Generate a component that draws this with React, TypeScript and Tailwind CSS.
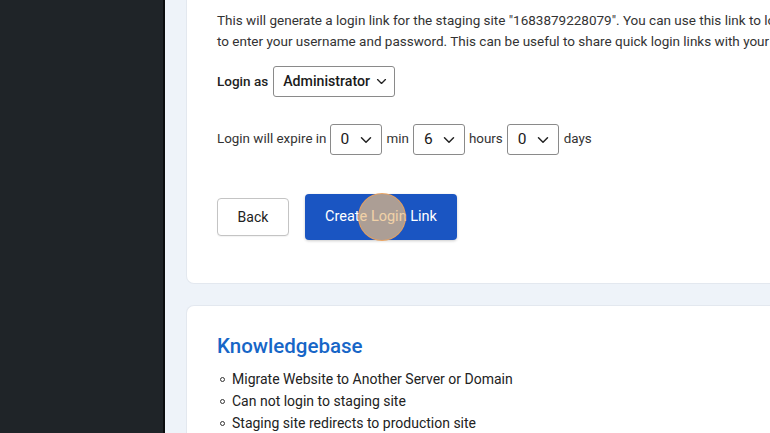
import React from "react";

function Chevron({ className = "" }: { className?: string }) {
  return (
    <svg viewBox="0 0 12 8" className={className} fill="none" stroke="#222" strokeWidth="1.5" strokeLinecap="round" strokeLinejoin="round">
      <path d="M1.5 1.8 L6 6.2 L10.5 1.8" />
    </svg>
  );
}

function NumSelect({ value }: { value: string }) {
  return (
    <div className="flex h-[31px] w-[52px] shrink-0 items-center justify-between rounded-[3px] border border-[#8a8a8a] bg-white pl-[10px] pr-[9px]">
      <span className="text-[15.5px] text-[#1a1a1a]">{value}</span>
      <Chevron className="h-[8px] w-[12px] shrink-0" />
    </div>
  );
}

function Bullet({ children }: { children: React.ReactNode }) {
  return (
    <li className="flex items-center">
      <span className="ml-[3px] mr-[7px] h-[5px] w-[5px] shrink-0 rounded-full border border-[#333]" />
      <span>{children}</span>
    </li>
  );
}

export default function App() {
  return (
    <div
      className="flex h-[433px] w-[770px] overflow-hidden bg-[#eef3f9] text-[#2b2b2b]"
      style={{ fontFamily: "Roboto, 'Liberation Sans', sans-serif" }}
    >
      <div className="h-full w-[163px] shrink-0 bg-[#1f2428]" />
      <div className="h-full w-[2px] shrink-0 bg-[#0b0d0f]" />
      <div className="flex shrink-0 flex-col pl-[21px]">
        <div className="w-[1000px] rounded-b-[8px] border border-t-0 border-[#e3e8ef] bg-white pb-[43px] pl-[30px] pt-[10px]">
          <p className="whitespace-nowrap text-[13.5px] leading-[21px] text-[#333]">
            This will generate a login link for the staging site "1683879228079". You can use this link to login without having
            <br />
            to enter your username and password. This can be useful to share quick login links with your clients.
          </p>
          <div className="mt-[14px] flex items-center gap-[5px]">
            <span className="text-[13.5px] font-medium text-[#222]">Login as</span>
            <div className="flex h-[31px] w-[122px] items-center justify-between rounded-[3px] border border-[#8a8a8a] bg-white pl-[9px] pr-[7px]">
              <span className="text-[14.2px] font-medium text-[#1a1a1a]">Administrator</span>
              <Chevron className="h-[7px] w-[11px] shrink-0" />
            </div>
          </div>
          <div className="mt-[27px] flex items-center text-[13.4px] text-[#333]">
            <span className="mr-[3px]">Login will expire in</span>
            <NumSelect value="0" />
            <span className="ml-[5px] mr-[4px]">min</span>
            <NumSelect value="6" />
            <span className="ml-[4px] mr-[4px]">hours</span>
            <NumSelect value="0" />
            <span className="ml-[5px]">days</span>
          </div>
          <div className="mt-[39px] flex items-center gap-[16px]">
            <button className="h-[38px] w-[72px] rounded-[4px] border border-[#c4c4c4] bg-white text-[14px] text-[#222] shadow-[0_1px_1px_rgba(0,0,0,0.05)]">
              Back
            </button>
            <div className="relative">
              <button className="h-[46px] w-[152px] rounded-[4px] bg-[#1a55c2] text-[14.5px] text-white shadow-[0_1px_3px_rgba(0,0,0,0.2)]">
                Create Login Link
              </button>
              <div className="pointer-events-none absolute left-[53px] top-[-1px] h-[48px] w-[48px] rounded-full border border-[rgba(235,160,90,0.85)] bg-[rgba(235,190,130,0.7)]" />
            </div>
          </div>
        </div>
        <div className="mt-[21px] w-[1000px] rounded-t-[8px] border border-b-0 border-[#e3e8ef] bg-white pl-[30px] pt-[26px] pb-[40px]">
          <h2 className="text-[20.5px] font-medium leading-[28px] text-[#1766c7]">Knowledgebase</h2>
          <ul className="mt-[8px] text-[14px] leading-[22px] text-[#222]">
            <Bullet>Migrate Website to Another Server or Domain</Bullet>
            <Bullet>Can not login to staging site</Bullet>
            <Bullet>Staging site redirects to production site</Bullet>
          </ul>
        </div>
      </div>
    </div>
  );
}
